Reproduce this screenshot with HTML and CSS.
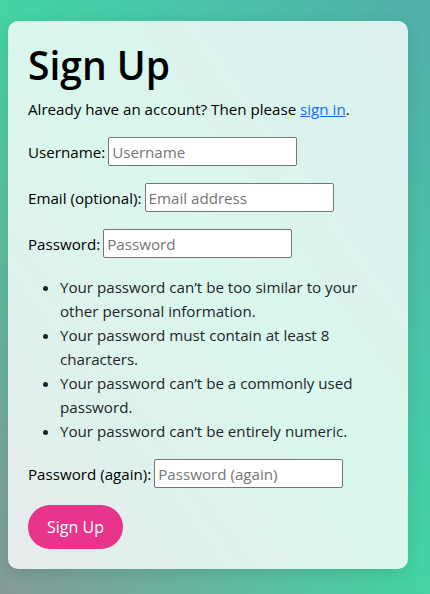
FILE: index.html
```html
<!DOCTYPE html>
<html lang="en">
<head>
<meta charset="utf-8">
<title>Sign Up</title>
<link rel="stylesheet" href="styles.css">
</head>
<body>
<div class="page">
  <div class="card">
    <h1 class="title">Sign Up</h1>
    <p class="intro">Already have an account? Then please <a class="link" href="#">sign in</a>.</p>
    <form class="form">
      <p class="field"><label class="label" for="u">Username:</label><input class="input" id="u" type="text" placeholder="Username"></p>
      <p class="field"><label class="label" for="e">Email (optional):</label><input class="input" id="e" type="email" placeholder="Email address"></p>
      <p class="field"><label class="label" for="p1">Password:</label><input class="input" id="p1" type="password" placeholder="Password"></p>
      <ul class="rules">
        <li>Your password can’t be too similar to your other personal information.</li>
        <li>Your password must contain at least 8 characters.</li>
        <li>Your password can’t be a commonly used password.</li>
        <li>Your password can’t be entirely numeric.</li>
      </ul>
      <p class="field"><label class="label" for="p2">Password (again):</label><input class="input" id="p2" type="password" placeholder="Password (again)"></p>
      <button class="btn" type="button">Sign Up</button>
    </form>
  </div>
</div>
</body>
</html>
```

FILE: styles.css
```css
html, body {
  margin: 0;
  padding: 0;
  height: 100%;
}
body {
  font-family: "Open Sans", "Noto Sans", sans-serif;
  font-size: 15.15px;
  line-height: 24px;
  color: #212529;
  background: linear-gradient(to top right, #859a99 0%, #43d4a5 50%, #52aeab 100%);
  background-attachment: fixed;
}
.page {
  padding: 21px 8px;
}
.card {
  width: 400px;
  box-sizing: border-box;
  padding: 20px;
  background: rgba(255, 255, 255, 0.8);
  border-radius: 10px;
  box-shadow: 0 4px 16px rgba(0, 0, 0, 0.12);
}
.title {
  margin: 0 0 8px;
  font-size: 39px;
  line-height: 48px;
  font-weight: 600;
  color: #000;
}
.intro {
  margin: 0 0 16px;
  color: #000;
}
.link {
  color: #0d6efd;
  text-decoration: underline;
}
.form {
  margin: 0;
}
.field {
  display: flex;
  align-items: center;
  gap: 3px;
  min-height: 30px;
  margin: 0 0 16px;
  color: #000;
}
.label {
  white-space: nowrap;
}
.input {
  box-sizing: border-box;
  width: 189px;
  height: 29px;
  margin: 0 0 1px;
  padding: 1px 3px;
  border: 1px solid #767676;
  border-radius: 2px;
  background: #fff;
  font-family: inherit;
  font-size: 15.15px;
  color: #000;
}
.input::placeholder {
  color: #757575;
}
.rules {
  margin: 0 0 16px;
  padding-left: 32px;
}
.btn {
  display: block;
  width: 95px;
  height: 44px;
  padding: 0;
  border: none;
  border-radius: 22px;
  background: #e8348a;
  color: #fff;
  font-family: inherit;
  font-size: 16px;
  font-weight: 500;
}
```
